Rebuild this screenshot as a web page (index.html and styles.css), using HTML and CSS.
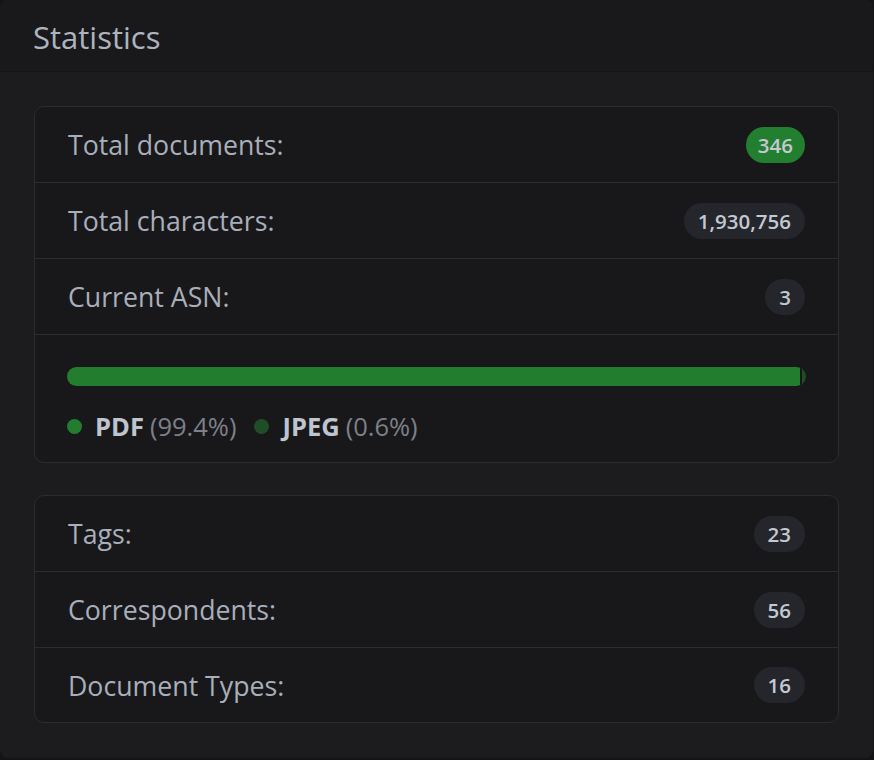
FILE: index.html
```html
<!DOCTYPE html>
<html>
<head>
<meta charset="utf-8">
<link rel="stylesheet" href="styles.css">
</head>
<body>
<div class="card">
  <div class="card-header">Statistics</div>
  <div class="card-body">
    <ul class="list">
      <li class="row"><span class="label">Total documents:</span><span class="badge green">346</span></li>
      <li class="row"><span class="label">Total characters:</span><span class="badge">1,930,756</span></li>
      <li class="row"><span class="label">Current ASN:</span><span class="badge">3</span></li>
      <li class="chart">
        <div class="bar">
          <div class="seg pdf" style="width:99.4%"></div>
          <div class="seg jpeg" style="width:0.6%"></div>
        </div>
        <div class="legend">
          <span class="item"><span class="dot pdf"></span><b>PDF</b><span class="pct">(99.4%)</span></span>
          <span class="item"><span class="dot jpeg"></span><b>JPEG</b><span class="pct">(0.6%)</span></span>
        </div>
      </li>
    </ul>
    <ul class="list">
      <li class="row"><span class="label">Tags:</span><span class="badge">23</span></li>
      <li class="row"><span class="label">Correspondents:</span><span class="badge">56</span></li>
      <li class="row"><span class="label">Document Types:</span><span class="badge">16</span></li>
    </ul>
  </div>
</div>
</body>
</html>
```
FILE: styles.css
```css
html, body {
  margin: 0;
  padding: 0;
  background: #141416;
}
body {
  font-family: "Open Sans", "Noto Sans", sans-serif;
  color: #a9afba;
}
.card {
  width: 873px;
  height: 758px;
  background: #1c1c1e;
  border-radius: 8px;
  box-sizing: border-box;
  overflow: hidden;
}
.card-header {
  height: 72px;
  box-sizing: border-box;
  background: #19191b;
  border-bottom: 1px solid #141416;
  padding: 2px 33px 0;
  display: flex;
  align-items: center;
  font-size: 31px;
  color: #aeb4bf;
}
.card-body {
  padding: 34px 34px 35px 34px;
  display: flex;
  flex-direction: column;
  gap: 32px;
}
.list {
  list-style: none;
  margin: 0;
  padding: 0;
  background: #18181a;
  border: 1px solid #2a2c30;
  border-radius: 10px;
}
.row {
  height: 76px;
  box-sizing: border-box;
  display: flex;
  align-items: center;
  justify-content: space-between;
  padding: 0 33px;
  border-bottom: 1px solid #2a2c30;
  font-size: 26.7px;
}
.list > li:last-child {
  border-bottom: none;
}
.list > li.row:last-child {
  height: 74px;
}
.badge {
  background: #24262b;
  color: #c3c8d1;
  font-weight: 600;
  font-size: 20.5px;
  height: 36px;
  min-width: 39px;
  box-sizing: border-box;
  padding: 0 14px;
  border-radius: 18px;
  display: inline-flex;
  align-items: center;
  justify-content: center;
}
.badge.green {
  background: #237f30;
  padding: 0 12px;
}
.chart {
  padding: 32px 32px 19px 32px;
}
.bar {
  display: flex;
  height: 19px;
  border-radius: 10px;
  overflow: hidden;
}
.seg.pdf { background: #237d2f; border-right: 2px solid #18181a; box-sizing: border-box; }
.seg.jpeg { background: #1f4d28; }
.legend {
  display: flex;
  gap: 18px;
  margin-top: 23px;
  font-size: 25.5px;
}
.item {
  display: inline-flex;
  align-items: center;
}
.item b {
  color: #bfc4ce;
  font-weight: 700;
  margin-left: 13px;
  margin-right: 6px;
}
.pct { color: #7c8089; }
.dot {
  width: 15px;
  height: 15px;
  border-radius: 50%;
  display: inline-block;
}
.dot.pdf { background: #237d2f; }
.dot.jpeg { background: #1f4d28; }
```
